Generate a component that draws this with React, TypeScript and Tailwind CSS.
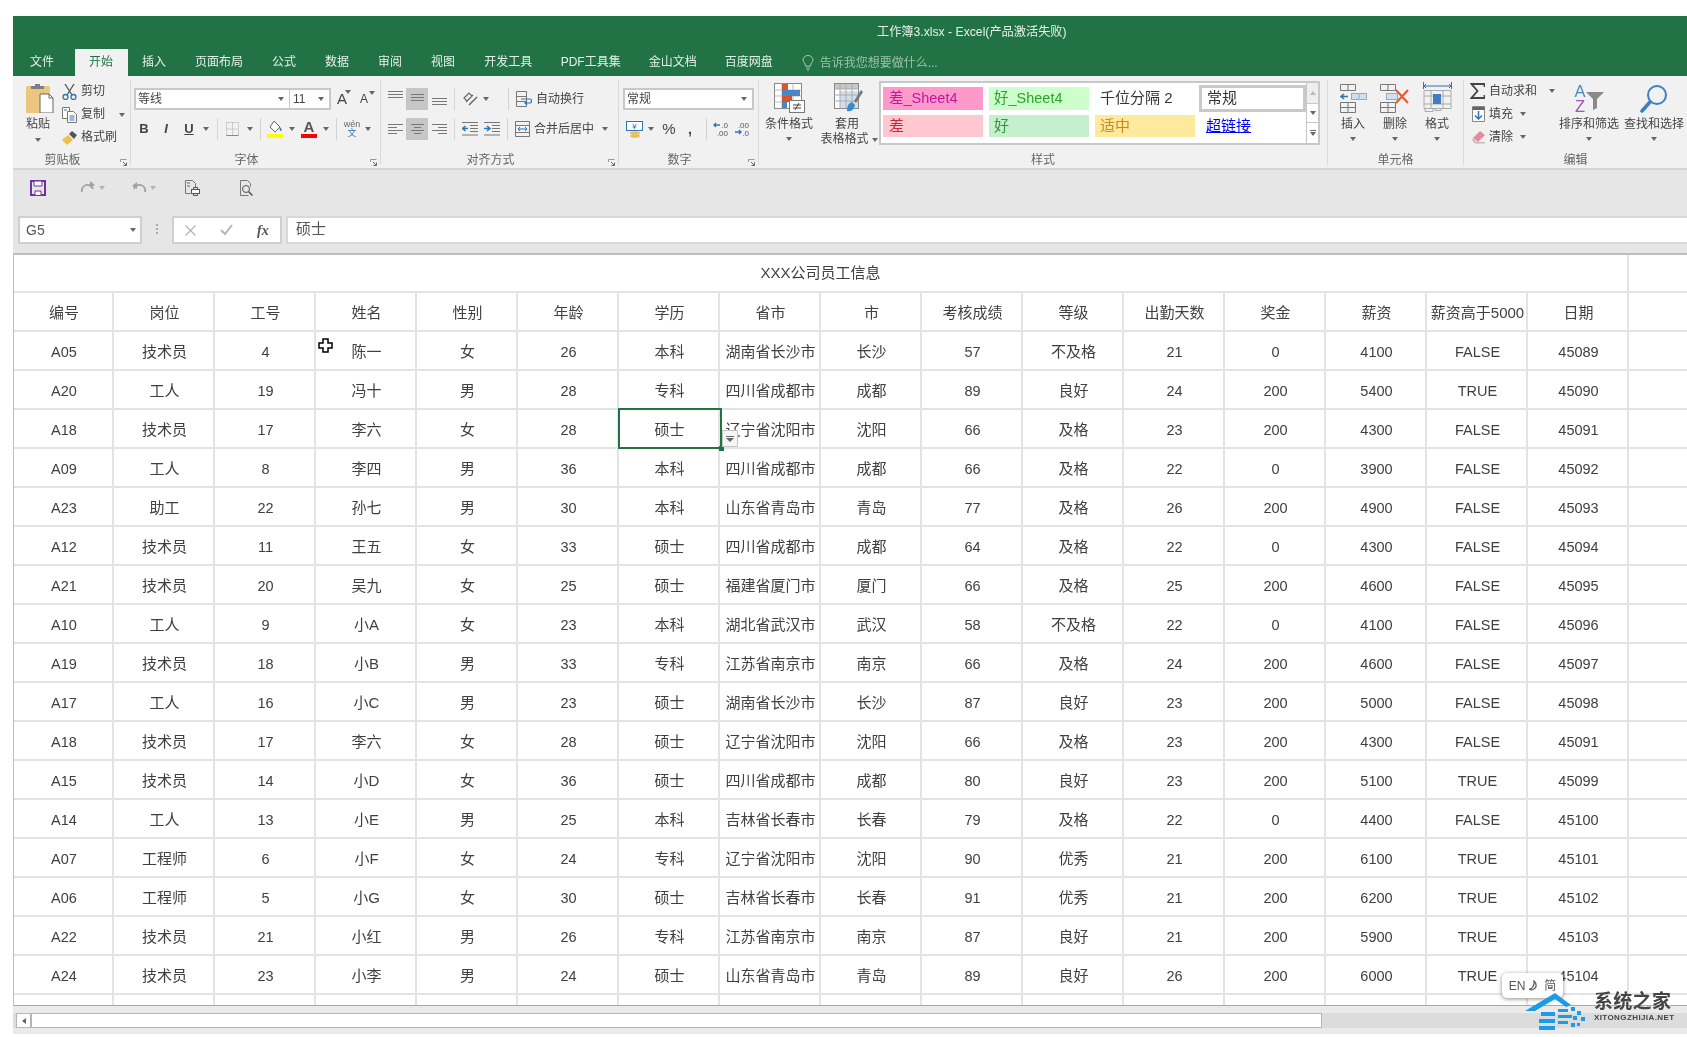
import type { ReactNode } from "react";

const columns = ["编号", "岗位", "工号", "姓名", "性别", "年龄", "学历", "省市", "市", "考核成绩", "等级", "出勤天数", "奖金", "薪资", "薪资高于5000", "日期"];

const rows = [
  "A05 技术员 4 陈一 女 26 本科 湖南省长沙市 长沙 57 不及格 21 0 4100 FALSE 45089",
  "A20 工人 19 冯十 男 28 专科 四川省成都市 成都 89 良好 24 200 5400 TRUE 45090",
  "A18 技术员 17 李六 女 28 硕士 辽宁省沈阳市 沈阳 66 及格 23 200 4300 FALSE 45091",
  "A09 工人 8 李四 男 36 本科 四川省成都市 成都 66 及格 22 0 3900 FALSE 45092",
  "A23 助工 22 孙七 男 30 本科 山东省青岛市 青岛 77 及格 26 200 4900 FALSE 45093",
  "A12 技术员 11 王五 女 33 硕士 四川省成都市 成都 64 及格 22 0 4300 FALSE 45094",
  "A21 技术员 20 吴九 女 25 硕士 福建省厦门市 厦门 66 及格 25 200 4600 FALSE 45095",
  "A10 工人 9 小A 女 23 本科 湖北省武汉市 武汉 58 不及格 22 0 4100 FALSE 45096",
  "A19 技术员 18 小B 男 33 专科 江苏省南京市 南京 66 及格 24 200 4600 FALSE 45097",
  "A17 工人 16 小C 男 23 硕士 湖南省长沙市 长沙 87 良好 23 200 5000 FALSE 45098",
  "A18 技术员 17 李六 女 28 硕士 辽宁省沈阳市 沈阳 66 及格 23 200 4300 FALSE 45091",
  "A15 技术员 14 小D 女 36 硕士 四川省成都市 成都 80 良好 23 200 5100 TRUE 45099",
  "A14 工人 13 小E 男 25 本科 吉林省长春市 长春 79 及格 22 0 4400 FALSE 45100",
  "A07 工程师 6 小F 女 24 专科 辽宁省沈阳市 沈阳 90 优秀 21 200 6100 TRUE 45101",
  "A06 工程师 5 小G 女 30 硕士 吉林省长春市 长春 91 优秀 21 200 6200 TRUE 45102",
  "A22 技术员 21 小红 男 26 专科 江苏省南京市 南京 87 良好 21 200 5900 TRUE 45103",
  "A24 技术员 23 小李 男 24 硕士 山东省青岛市 青岛 89 良好 26 200 6000 TRUE 45104",
].map((r) => r.split(" "));

const tabs = [
  { name: "文件", cls: "pl-[14.5px] pr-[20.5px]" },
  { name: "开始", cls: "px-[14.5px]" },
  { name: "插入", cls: "px-[14.5px]" },
  { name: "页面布局", cls: "px-[14.5px]" },
  { name: "公式", cls: "px-[14.5px]" },
  { name: "数据", cls: "px-[14.5px]" },
  { name: "审阅", cls: "px-[14.5px]" },
  { name: "视图", cls: "px-[14.5px]" },
  { name: "开发工具", cls: "px-[14.5px]" },
  { name: "PDF工具集", cls: "px-[14px]" },
  { name: "金山文档", cls: "px-[14px]" },
  { name: "百度网盘", cls: "px-[14px]" },
];

const gridRow = "grid h-[39px] grid-cols-[100px_repeat(15,101px)_1fr]";
const cellLine = "flex items-center justify-center border-r-2 border-b-2 border-[#e3e3e3]";

const hasCjk = (s: string) => /[\u4e00-\u9fff]/.test(s);

const Caret = ({ className = "" }: { className?: string }) => (
  <svg className={`h-[4px] w-[6px] shrink-0 ${className}`} viewBox="0 0 6 4">
    <path d="M0 0h6L3 4z" fill="#666" />
  </svg>
);

const Sep = ({ className = "" }: { className?: string }) => (
  <div className={`h-[22px] w-px shrink-0 bg-[#d2d2d2] ${className}`} />
);

const Launcher = () => (
  <svg className="absolute right-[3px] top-[7px] h-[7px] w-[7px]" viewBox="0 0 7 7" fill="none">
    <path d="M.5 3V.5H6.5M.5.5" stroke="#999" />
    <path d="M3 3l3 3M6.5 3.5v3h-3" stroke="#666" />
  </svg>
);

const Group = ({ w, label, launcher, children }: { w: string; label: string; launcher?: boolean; children: ReactNode }) => (
  <div className={`flex h-full shrink-0 flex-col ${w}`}>
    <div className="flex h-[76px] min-h-0">{children}</div>
    <div className={`relative flex h-[16px] items-center justify-center text-[12px] text-[#666] ${launcher ? "pr-[18px]" : ""}`}>
      {label}
      {launcher && <Launcher />}
    </div>
  </div>
);

const Divider = () => <div className="mt-[4px] h-[85px] w-px shrink-0 bg-[#dadada]" />;

const LargeButton = ({ w, icon, line2, children }: { w: string; icon: ReactNode; line2?: string; children: string }) => (
  <div className={`flex shrink-0 flex-col items-center pt-[7px] text-[12px] leading-[15px] text-[#444] ${w}`}>
    <div className="flex h-[30px] items-center justify-center">{icon}</div>
    <span className={`mt-[4px] whitespace-nowrap ${line2 ? "pr-[4px]" : ""}`}>{children}</span>
    {line2 ? (
      <span className="flex items-center gap-[3px] whitespace-nowrap">
        {line2}
        <Caret />
      </span>
    ) : (
      <Caret className="mt-[5px]" />
    )}
  </div>
);

const Lines = ({ x, className = "" }: { x: [number, number][]; className?: string }) => (
  <svg className={`h-[12px] w-[15px] shrink-0 ${className}`} viewBox="0 0 15 12" stroke="#777">
    {x.map(([a, b], i) => (
      <path key={i} d={`M${a} ${1.5 + i * 3}H${b}`} />
    ))}
  </svg>
);

const Paste = () => (
  <svg className="h-[30px] w-[28px]" viewBox="0 0 28 30">
    <rect x="0" y="3" width="24" height="27" rx="1.5" fill="#ecc57f" />
    <path d="M5 6V3h4V1h5v2h4v3z" fill="#7f7f7f" />
    <path d="M14 11h9l4 4v15H14z" fill="#fff" stroke="#666" />
    <path d="M23 11v4h4" fill="none" stroke="#666" />
  </svg>
);

const Scissors = () => (
  <svg className="h-[16px] w-[15px] shrink-0" viewBox="0 0 15 16" fill="none">
    <path d="M3 0l7 11M12 0L5 11" stroke="#555" strokeWidth="1.3" />
    <circle cx="3.5" cy="13" r="2.5" stroke="#2e75b6" strokeWidth="1.3" />
    <circle cx="11.5" cy="13" r="2.5" stroke="#2e75b6" strokeWidth="1.3" />
  </svg>
);

const CopyIcon = () => (
  <svg className="h-[16px] w-[15px] shrink-0" viewBox="0 0 15 16" fill="#fff" stroke="#777">
    <path d="M.5.5h7v11h-7z" />
    <path d="M5.5 4.5h6l3 3v8h-9z" />
    <path d="M2 3h3M7.5 9h5M7.5 11h5M7.5 13h5" stroke="#2e75b6" />
  </svg>
);

const Brush = () => (
  <svg className="h-[16px] w-[16px] shrink-0" viewBox="0 0 16 16">
    <path d="M0 10l6-5 5 5-6 5z" fill="#ecc050" />
    <path d="M7 4l3-3 5 4-3 4z" fill="#555" />
  </svg>
);

const BorderIcon = () => (
  <svg className="h-[14px] w-[13px] shrink-0" viewBox="0 0 13 14" fill="none">
    <path d="M.5.5h12v13H.5z" stroke="#aaa" strokeDasharray="1 1" />
    <path d="M6.5.5v13M.5 7h12" stroke="#aaa" strokeDasharray="1 1" />
    <path d="M.5 13.5h12" stroke="#888" />
  </svg>
);

const FillIcon = () => (
  <svg className="h-[18px] w-[16px] shrink-0" viewBox="0 0 16 18">
    <path d="M7 1l6 6-5 5-5-5z" fill="#fff" stroke="#666" />
    <path d="M13 7c2 2 2 4 1 4s-2-2-1-4z" fill="#2e75b6" />
    <rect x="0" y="14" width="16" height="4" fill="#ffff00" />
  </svg>
);

const ColorIcon = () => (
  <div className="flex w-[16px] shrink-0 flex-col items-center text-[15px] font-bold leading-[14px] text-[#555]">
    A
    <div className="h-[4px] w-[16px] bg-[#ff0000]" />
  </div>
);

const Orientation = () => (
  <svg className="h-[16px] w-[16px] shrink-0" viewBox="0 0 16 16" fill="none" stroke="#666">
    <path d="M2 7l5-5 3 3-5 5zM4 11l7-7" strokeWidth="1.2" />
    <path d="M7 14L15 6" strokeWidth="1.4" />
  </svg>
);

const Indent = ({ flip }: { flip?: boolean }) => (
  <svg className="h-[14px] w-[16px] shrink-0" viewBox="0 0 16 14" fill="none">
    <path d="M0 .5h16M8 3.500h8M8 6.500h8M8 9.500h8M0 13h16" stroke="#777" />
    <path d={flip ? "M0 6.500h5M3 4l3 2.500L3 9" : "M6 6.500H1M3.500 4L.5 6.500 3.500 9"} stroke="#2e75b6" strokeWidth="1.5" />
  </svg>
);

const WrapIcon = () => (
  <svg className="h-[16px] w-[16px] shrink-0" viewBox="0 0 16 16" fill="none">
    <path d="M.5.5h10v15H.5zM.5 5.500h10M.5 10.500h10" stroke="#777" />
    <path d="M5 8h9c2 0 2 4 0 4H9M11 10l-2 2 2 2" stroke="#2e75b6" strokeWidth="1.2" />
  </svg>
);

const MergeIcon = () => (
  <svg className="h-[16px] w-[15px] shrink-0" viewBox="0 0 15 16" fill="none">
    <path d="M.5.5h14v15H.5zM.5 4.500h14M.5 11.500h14" stroke="#777" />
    <path d="M3 8h9M5 6L3 8l2 2M10 6l2 2-2 2" stroke="#2e75b6" />
  </svg>
);

const Currency = () => (
  <svg className="h-[17px] w-[17px] shrink-0" viewBox="0 0 17 17">
    <rect x=".5" y=".5" width="16" height="9" fill="#fff" stroke="#2e75b6" />
    <text x="8.5" y="8" fontSize="8" textAnchor="middle" fill="#2e75b6">¥</text>
    <ellipse cx="9" cy="12" rx="5" ry="1.8" fill="#ecc050" />
    <ellipse cx="9" cy="15" rx="5" ry="1.8" fill="#ecc050" />
  </svg>
);

const Decimal = ({ inc }: { inc?: boolean }) => (
  <svg className="h-[16px] w-[15px] shrink-0" viewBox="0 0 15 16">
    <text x="15" y="7" fontSize="8" textAnchor="end" fill="#555">{inc ? ".0" : ".00"}</text>
    <text x="15" y="15" fontSize="8" textAnchor="end" fill="#555">{inc ? ".00" : ".0"}</text>
    <path d={inc ? "M7 4H1M3 2L1 4l2 2" : "M1 11h6M5 9l2 2-2 2"} stroke="#2e75b6" strokeWidth="1.3" fill="none" />
  </svg>
);

const CondFormat = () => (
  <svg className="h-[30px] w-[31px]" viewBox="0 0 31 30">
    <rect x=".5" y=".5" width="27" height="25" fill="#fff" stroke="#888" />
    <path d="M8 .5v25M19 .5v25M.5 7h27M.5 13h27M.5 19h27" stroke="#bbb" />
    <rect x="8" y="1" width="6" height="6" fill="#d9532b" />
    <rect x="8" y="7" width="18" height="6" fill="#4a86c5" />
    <rect x="8" y="13" width="10" height="6" fill="#d9532b" />
    <rect x="8" y="19" width="5" height="6" fill="#4a86c5" />
    <rect x="15.5" y="17.5" width="15" height="12" fill="#fff" stroke="#777" />
    <path d="M19 22h8M19 25h8M25 20l-4 7" stroke="#444" fill="none" />
  </svg>
);

const TableFormat = () => (
  <svg className="h-[30px] w-[30px]" viewBox="0 0 30 30">
    <rect x=".5" y=".5" width="24" height="25" fill="#fff" stroke="#888" />
    <rect x="1" y="1" width="23" height="5" fill="#c8c8c8" />
    <rect x="6" y="8" width="18" height="17" fill="#cfdff0" />
    <path d="M6 .5v25M12 .5v25M18 .5v25M.5 6h24M.5 12h24M.5 18h24" stroke="#aaa" />
    <path d="M20 18l7-11 2 2-7 11z" fill="#777" />
    <path d="M13 28c5 1 7-2 8-6l-3-3c-3 1-5 3-5 9z" fill="#3a8ad0" />
  </svg>
);

const InsertIcon = () => (
  <svg className="h-[29px] w-[27px]" viewBox="0 0 27 29" fill="none">
    <path d="M.5.5h15v6H.5zM8 .5v6M.5 18.500h15v10H.5zM8 18.500v10M.5 23.500h15" stroke="#777" />
    <rect x="11.5" y="9.5" width="15" height="6" fill="#cfdff0" stroke="#9ab" />
    <path d="M19 9.500v6" stroke="#9ab" />
    <path d="M8 12.500H1M4 10l-3 2.500L4 15" stroke="#2e75b6" strokeWidth="1.5" />
  </svg>
);

const DeleteIcon = () => (
  <svg className="h-[29px] w-[30px]" viewBox="0 0 30 29" fill="none">
    <path d="M.5.5h15v6H.5zM8 .5v6M.5 18.500h15v10H.5zM8 18.500v10M.5 23.500h15" stroke="#777" />
    <rect x="6.5" y="9.5" width="11" height="6" fill="#cfdff0" stroke="#9ab" />
    <path d="M16 6l12 13M28 6L16 19" stroke="#e8562a" strokeWidth="2" />
  </svg>
);

const FormatIcon = () => (
  <svg className="h-[32px] w-[29px]" viewBox="0 0 29 32" fill="none">
    <path d="M1 4h27M3 2L1 4l2 2M26 2l2 2-2 2M.5 0v7M28.500 0v7" stroke="#2e75b6" />
    <path d="M1 8.500h27v18H1zM8 8.500v18M20 8.500v18M1 14h27M1 22h27M2 26.500v3h8v-3M12 26.500v2h6v-2" stroke="#aaa" />
    <rect x="10" y="12" width="8" height="10" fill="#3f7fc0" />
  </svg>
);

const SumIcon = () => (
  <svg className="h-[16px] w-[15px] shrink-0" viewBox="0 0 15 16" fill="none">
    <path d="M14.500 4V1H1.500l6 7-6 7h13v-3" stroke="#444" strokeWidth="1.8" />
  </svg>
);

const FillDown = () => (
  <svg className="h-[16px] w-[13px] shrink-0" viewBox="0 0 13 16" fill="none">
    <path d="M.5.5h12v15H.5z" stroke="#888" fill="#fff" />
    <path d="M.5 2.500h12" stroke="#666" strokeWidth="3" />
    <path d="M6.500 5v8M3 9.500l3.500 3.500L10 9.500" stroke="#2e75b6" strokeWidth="1.5" />
  </svg>
);

const Eraser = () => (
  <svg className="h-[14px] w-[13px] shrink-0" viewBox="0 0 13 14">
    <path d="M1 8l7-7 5 4-7 7z" fill="#e88a9e" />
    <path d="M1 8l3 4h9v1.500H3L0 10z" fill="#bbb" />
  </svg>
);

const SortIcon = () => (
  <div className="flex h-[28px] w-[30px] items-start">
    <div className="flex w-[12px] shrink-0 flex-col items-center text-[16.5px] leading-[14px]">
      <span className="text-[#4a86c5]">A</span>
      <span className="mt-[1px] text-[#9b59b6]">Z</span>
    </div>
    <svg className="mt-[8px] h-[18px] w-[18px] shrink-0" viewBox="0 0 18 18">
      <path d="M0 0h18l-7 7v9l-4 2V7z" fill="#8a8a8a" />
    </svg>
  </div>
);

const FindIcon = () => (
  <svg className="h-[29px] w-[28px]" viewBox="0 0 28 29" fill="none">
    <circle cx="17" cy="11" r="9" stroke="#3f7fc0" strokeWidth="2" />
    <path d="M10 18l-8 9" stroke="#3f7fc0" strokeWidth="3.5" strokeLinecap="round" />
  </svg>
);

const Quick = ({ className = "", children }: { className?: string; children: ReactNode }) => (
  <svg className={`h-[16px] w-[16px] shrink-0 ${className}`} viewBox="0 0 16 16" fill="none">
    {children}
  </svg>
);

export default function App() {
  return (
    <div className="relative h-[1037px] w-[1687px] overflow-hidden bg-white pl-[13px] pt-[16px] font-['Liberation_Sans','Noto_Sans_CJK_SC',sans-serif] text-[#404040] blur-[0.4px]">
      {/* Title bar + tabs */}
      <div className="h-[60px] bg-[#217346] text-[12px] text-white">
        <div className="flex h-[33px] items-center pl-[864px] text-[12.2px] text-[#e8f0ea]">工作簿3.xlsx - Excel(产品激活失败)</div>
        <div className="flex h-[27px] items-center pl-[2.5px]">
          {tabs.map((tab) => (
            <div
              key={tab.name}
              className={`flex h-full items-center pb-px ${tab.cls} ${tab.name === "开始" ? "bg-[#f1f1f1] text-[#217346]" : "text-[#e6efe9]"}`}
            >
              {tab.name}
            </div>
          ))}
          <svg className="ml-[15px] h-[16px] w-[12px]" viewBox="0 0 12 16" fill="none" stroke="#a9c9b5">
            <path d="M3.500 11c0-3-2.500-3.500-2.500-6a5 4.500 0 0110 0c0 2.500-2.500 3-2.500 6zM4 13h4M5 15h2" />
          </svg>
          <span className="ml-[6px] text-[#9dc0aa]">告诉我您想要做什么...</span>
        </div>
      </div>

      {/* Ribbon */}
      <div className="flex h-[94px] border-b-2 border-[#d4d4d4] bg-[#f1f1f1] text-[12px] text-[#444]">
        <Group w="w-[117px]" label="剪贴板" launcher>
          <div className="ml-[10px] flex w-[30px] flex-col items-center pt-[7px] leading-[16px]">
            <div className="ml-[4px]"><Paste /></div>
            <span className="mt-[3px] whitespace-nowrap">粘贴</span>
            <Caret className="mt-[6px]" />
          </div>
          <div className="ml-[9px] flex flex-col pt-[4px] leading-[23px]">
            <div className="flex h-[23px] items-center gap-[4px]"><Scissors />剪切</div>
            <div className="flex h-[23px] items-center gap-[4px]"><CopyIcon />复制<Caret className="ml-[10px]" /></div>
            <div className="flex h-[23px] items-center gap-[3px]"><Brush />格式刷</div>
          </div>
        </Group>
        <Divider />
        <Group w="w-[249px]" label="字体" launcher>
          <div className="flex flex-col pt-[12px]">
            <div className="flex h-[22px] items-center">
              <div className="ml-[3px] flex h-[22px] w-[157px] items-center justify-between border-2 border-[#c8c8c8] bg-white pl-[2px] pr-[5px]">等线<Caret /></div>
              <div className="-ml-[1px] flex h-[22px] w-[41px] items-center justify-between border-2 border-l-0 border-[#c8c8c8] bg-white pl-[3px] pr-[5px]">11<Caret /></div>
              <span className="relative ml-[6px] w-[14px] text-[15px]">A<Caret className="absolute right-[0px] top-[2px]" /></span>
              <span className="relative ml-[9px] w-[13px] text-[12px]">A<Caret className="absolute -right-[2px] top-[1px]" /></span>
            </div>
            <div className="mt-[8px] flex h-[22px] items-center">
              <span className="ml-[6px] w-[14px] text-center text-[13px] font-bold">B</span>
              <span className="ml-[8px] w-[14px] text-center text-[13px] font-bold italic">I</span>
              <span className="ml-[9px] w-[14px] text-center text-[13px] font-bold underline">U</span>
              <Caret className="ml-[7px]" />
              <Sep className="ml-[8px]" />
              <div className="ml-[8px]"><BorderIcon /></div>
              <Caret className="ml-[8px]" />
              <Sep className="ml-[7px]" />
              <div className="ml-[6px]"><FillIcon /></div>
              <Caret className="ml-[6px]" />
              <div className="ml-[6px]"><ColorIcon /></div>
              <Caret className="ml-[6px]" />
              <Sep className="ml-[7px]" />
              <div className="ml-[7px] flex w-[16px] shrink-0 flex-col items-center text-[9px] leading-[9px]">
                <span className="text-[#666]">wén</span>
                <span className="text-[#2e75b6]">文</span>
              </div>
              <Caret className="ml-[5px]" />
            </div>
          </div>
        </Group>
        <Divider />
        <Group w="w-[237px]" label="对齐方式" launcher>
          <div className="flex flex-col pt-[12px]">
            <div className="flex h-[22px] items-center">
              <Lines className="ml-[7px] -mt-[6px]" x={[[0, 15], [0, 15], [0, 15]]} />
              <div className="ml-[3px] flex h-[22px] w-[22px] items-center justify-center bg-[#c6c6c6]"><Lines x={[[1, 14], [1, 14], [1, 14]]} /></div>
              <Lines className="ml-[4px] mt-[8px]" x={[[0, 15], [0, 15], [0, 15]]} />
              <Sep className="ml-[7px]" />
              <div className="ml-[7px]"><Orientation /></div>
              <Caret className="ml-[5px]" />
              <Sep className="ml-[19px]" />
              <div className="ml-[7px]"><WrapIcon /></div>
              <span className="ml-[4px] whitespace-nowrap">自动换行</span>
            </div>
            <div className="mt-[8px] flex h-[22px] items-center">
              <Lines className="ml-[7px]" x={[[0, 15], [0, 9], [0, 15], [0, 9]]} />
              <div className="ml-[3px] flex h-[22px] w-[22px] items-center justify-center bg-[#c6c6c6]"><Lines x={[[1, 14], [4, 11], [1, 14], [4, 11]]} /></div>
              <Lines className="ml-[4px]" x={[[0, 15], [6, 15], [0, 15], [6, 15]]} />
              <Sep className="ml-[7px]" />
              <div className="ml-[7px]"><Indent /></div>
              <div className="ml-[6px]"><Indent flip /></div>
              <Sep className="ml-[7px]" />
              <div className="ml-[7px]"><MergeIcon /></div>
              <span className="ml-[4px] whitespace-nowrap">合并后居中</span>
              <Caret className="ml-[8px]" />
            </div>
          </div>
        </Group>
        <Divider />
        <Group w="w-[139px]" label="数字" launcher>
          <div className="flex flex-col pt-[12px]">
            <div className="ml-[4px] flex h-[22px] w-[131px] items-center justify-between border-2 border-[#c8c8c8] bg-white pl-[2px] pr-[5px]">常规<Caret /></div>
            <div className="mt-[8px] flex h-[22px] items-center">
              <div className="ml-[7px]"><Currency /></div>
              <Caret className="ml-[5px]" />
              <span className="ml-[8px] w-[14px] text-center text-[15px]">%</span>
              <span className="ml-[8px] w-[12px] text-center text-[14px] font-bold">,</span>
              <Sep className="ml-[10px]" />
              <div className="ml-[6px]"><Decimal inc /></div>
              <div className="ml-[6px]"><Decimal /></div>
            </div>
          </div>
        </Group>
        <Divider />
        <Group w="w-[568px]" label="样式">
          <LargeButton w="w-[60px]" icon={<CondFormat />}>条件格式</LargeButton>
          <LargeButton w="w-[60px]" icon={<TableFormat />} line2="表格格式">套用</LargeButton>
          <div className="mt-[5px] flex h-[64px] w-[441px] shrink-0 border-2 border-[#c8c8c8] bg-white text-[15px]">
            <div className="grid h-fit grid-cols-[100px_100px_100px_105px] gap-x-[6px] gap-y-[5px] pl-[2px] pt-[4px]">
              <div className="flex h-[23px] items-center bg-[#ff99cc] pl-[6px] text-[14.5px] text-[#c0189a]">差_Sheet4</div>
              <div className="flex h-[23px] items-center bg-[#ccffcc] pl-[5px] text-[14.5px] text-[#2aa52a]">好_Sheet4</div>
              <div className="flex h-[23px] items-center pl-[5px] text-[#333]">千位分隔 2</div>
              <div className="-my-[2px] -ml-[2px] flex h-[27px] items-center border-[3px] border-[#c8c8c8] pl-[5px] text-[#333]">常规</div>
              <div className="flex h-[22px] items-center bg-[#ffc7ce] pl-[6px] text-[#d0233a]">差</div>
              <div className="flex h-[22px] items-center bg-[#c6efce] pl-[5px] text-[#2f9a3a]">好</div>
              <div className="flex h-[22px] items-center bg-[#ffe99c] pl-[5px] text-[#c48a1e]">适中</div>
              <div className="flex h-[22px] items-center pl-[5px] text-[#0000ff] underline">超链接</div>
            </div>
            <div className="ml-auto flex h-full w-[14px] flex-col border-l border-[#c8c8c8] bg-white">
              <div className="flex h-[21px] items-center justify-center border-b border-[#c8c8c8] bg-[#eee]"><Caret className="rotate-180 opacity-40" /></div>
              <div className="flex h-[19px] items-center justify-center border-b border-[#c8c8c8]"><Caret /></div>
              <div className="flex flex-1 flex-col items-center justify-center gap-[1px]"><div className="h-px w-[6px] bg-[#666]" /><Caret /></div>
            </div>
          </div>
        </Group>
        <Divider />
        <Group w="w-[135px]" label="单元格">
          <div className="ml-[4px] flex">
            <LargeButton w="w-[42px]" icon={<InsertIcon />}>插入</LargeButton>
            <LargeButton w="w-[42px]" icon={<DeleteIcon />}>删除</LargeButton>
            <LargeButton w="w-[42px]" icon={<FormatIcon />}>格式</LargeButton>
          </div>
        </Group>
        <Divider />
        <Group w="w-[223px]" label="编辑">
          <div className="ml-[6px] flex w-[89px] shrink-0 flex-col pt-[3px]">
            <div className="flex h-[23px] items-center gap-[4px]"><SumIcon />自动求和<Caret className="ml-[8px]" /></div>
            <div className="flex h-[23px] items-center gap-[4px] pl-[2px]"><FillDown />填充<Caret className="ml-[3px]" /></div>
            <div className="flex h-[23px] items-center gap-[4px] pl-[2px]"><Eraser />清除<Caret className="ml-[3px]" /></div>
          </div>
          <LargeButton w="w-[60px]" icon={<SortIcon />}>排序和筛选</LargeButton>
          <div className="ml-[5px]"><LargeButton w="w-[60px]" icon={<FindIcon />}>查找和选择</LargeButton></div>
        </Group>
      </div>

      {/* Quick access toolbar */}
      <div className="flex h-[45px] items-center bg-[#e6e6e6] pb-[10px]">
        <Quick className="ml-[17px]">
          <path d="M1 1h14v14H1z" stroke="#7030a0" strokeWidth="2" />
          <path d="M4 1h8v5H4zM5 15v-4h6v4" fill="#fff" stroke="#7030a0" />
        </Quick>
        <Quick className="ml-[34px]">
          <path d="M13 8A5.500 5.500 0 102 11" stroke="#a0a0a0" strokeWidth="1.800" transform="matrix(1 0 0 1 0 1)" />
          <path d="M10 1l5 4-5 3z" fill="#a0a0a0" />
        </Quick>
        <Caret className="ml-[3px] opacity-40" />
        <Quick className="ml-[26px]">
          <path d="M3 9a5.500 5.500 0 1111 3" stroke="#a0a0a0" strokeWidth="1.800" />
          <path d="M6 2L1 6l5 3z" fill="#a0a0a0" />
        </Quick>
        <Caret className="ml-[3px] opacity-40" />
        <Quick className="ml-[28px]">
          <path d="M1.500.5h7l3 3v4M1.500.5v13h5" stroke="#777" />
          <path d="M3 3h3M3 6h3" stroke="#2e75b6" />
          <rect x="7.500" y="9.500" width="8" height="4" stroke="#555" fill="#fff" />
          <path d="M9.500 9.500v-2h4v2M9.500 13.500v2h4v-2" stroke="#555" />
        </Quick>
        <Quick className="ml-[38px]">
          <path d="M2.500.5h7l3 3v3M2.500.5v15h8" stroke="#777" />
          <circle cx="8" cy="9" r="3.500" stroke="#555" />
          <path d="M10.500 11.500l4 4" stroke="#555" strokeWidth="1.500" />
        </Quick>
      </div>

      {/* Formula bar */}
      <div className="flex h-[38px] items-start bg-[#e6e6e6] text-[14px]">
        <div className="ml-[5px] mt-[1px] flex h-[28px] w-[124px] items-center justify-between border-2 border-[#d0d0d0] bg-white pl-[6px] pr-[4px] text-[#555]">G5<Caret /></div>
        <div className="ml-[14px] mt-[9px] flex flex-col gap-[2px]">
          <div className="h-[2px] w-[2px] bg-[#aaa]" />
          <div className="h-[2px] w-[2px] bg-[#aaa]" />
          <div className="h-[2px] w-[2px] bg-[#aaa]" />
        </div>
        <div className="ml-[14px] mt-[1px] flex h-[28px] w-[110px] items-center border-2 border-[#d0d0d0] bg-white">
          <svg className="ml-[11px] h-[11px] w-[11px]" viewBox="0 0 11 11" stroke="#b5b5b5" strokeWidth="1.300"><path d="M.5.5l10 10M10.500.5l-10 10" /></svg>
          <svg className="ml-[24px] h-[12px] w-[13px]" viewBox="0 0 13 12" fill="none" stroke="#b5b5b5" strokeWidth="2"><path d="M1 6l4 4 7-9" /></svg>
          <span className="ml-[24px] font-['Liberation_Serif',serif] text-[14px] font-bold italic text-[#555]">fx</span>
        </div>
        <div className="ml-[4px] mt-[1px] flex h-[28px] flex-1 items-center border-y-2 border-l-2 border-[#d8d8d8] bg-white pb-[2px] pl-[8px] text-[15px] text-[#555]">硕士</div>
      </div>

      {/* Sheet */}
      <div className="h-[753px] border-l border-t-2 border-b border-l-[#bdbdbd] border-t-[#bdbdbd] border-b-[#a8a8a8]">
        <div className="grid h-[38px] grid-cols-[1615px_1fr]">
          <div className={`${cellLine} text-[15px]`}>XXX公司员工信息</div>
          <div className="border-b-2 border-[#e3e3e3]" />
        </div>
        <div className={gridRow}>
          {columns.map((c) => (
            <div key={c} className={`${cellLine} pl-[2px] pt-[4px] text-[15px]`}>{c}</div>
          ))}
          <div className="border-b-2 border-[#e3e3e3]" />
        </div>
        {rows.map((row, i) => (
          <div key={i} className={gridRow}>
            {row.map((v, j) => (
              <div key={j} className={`${cellLine} pl-[2px] pt-[4px] ${hasCjk(v) ? "text-[15px]" : "text-[14.5px]"}`}>{v}</div>
            ))}
            <div className="border-b-2 border-[#e3e3e3]" />
          </div>
        ))}
        <div className="grid h-[10px] grid-cols-[100px_repeat(15,101px)_1fr]">
          {columns.map((c) => (
            <div key={c} className="border-r-2 border-[#e3e3e3]" />
          ))}
        </div>
      </div>

      {/* Horizontal scrollbar */}
      <div className="h-[28px] bg-[#eaeaea] pt-[7px]">
        <div className="flex h-[15px] bg-[#dcdcdc]">
          <div className="ml-[3px] flex h-[15px] w-[15px] items-center justify-center border border-[#b5b5b5] bg-white">
            <svg className="h-[6px] w-[4px]" viewBox="0 0 4 6"><path d="M4 0v6L0 3z" fill="#666" /></svg>
          </div>
          <div className="h-[15px] w-[1291px] border border-[#b5b5b5] bg-white" />
        </div>
      </div>

      {/* Selected cell */}
      <div className="absolute left-[618px] top-[408px] h-[41px] w-[104px] border-2 border-[#217346]" />
      <div className="absolute left-[719px] top-[446px] h-[5px] w-[5px] bg-[#217346]" />
      <div className="absolute left-[722px] top-[430px] flex h-[17px] w-[16px] items-center justify-center border border-[#c6c6c6] bg-[#f5f5f5]">
        <svg className="h-[6px] w-[8px]" viewBox="0 0 8 6"><path d="M0 0h8v1H0zM0 2h8L4 6z" fill="#666" /></svg>
      </div>

      {/* Mouse cursor */}
      <svg className="absolute left-[318px] top-[338px] h-[15px] w-[15px]" viewBox="0 0 15 15">
        <path d="M5 1h5v4h4v5h-4v4H5v-4H1V5h4z" fill="#fff" stroke="#000" strokeWidth="1.500" />
      </svg>

      {/* IME indicator */}
      <div className="absolute left-[1502px] top-[973px] flex h-[25px] w-[61px] items-center justify-center gap-[4px] rounded-[5px] bg-white text-[12px] text-[#555] shadow-[0_1px_4px_rgba(0,0,0,0.45)]">
        <span>EN</span>
        <svg className="h-[11px] w-[11px]" viewBox="0 0 11 11" fill="none" stroke="#555" strokeWidth="1.200">
          <path d="M5 1c3 3 3 7-1 8.500-1.500.5-3 0-3.500-.5 3 0 5-4 4.500-8z" />
        </svg>
        <span>简</span>
      </div>

      {/* Watermark */}
      <div className="absolute left-[1525px] top-[990px] flex items-start">
        <svg className="h-[47px] w-[65px]" viewBox="0 0 65 45">
          <path d="M0 20L30 2l16 12-5 2-11-8-20 12z" fill="#1c9be6" />
          <path d="M16 21h14v4H16zM14 28h16v4H14zM14 35h16v4H14zM33 18h10v3H33zM33 24h14v3H33zM33 30h10v3H33z" fill="#1c9be6" />
          <path d="M46 16h4v4h-4zM52 20h4v4h-4zM48 25h4v4h-4zM56 26h4v4h-4zM46 32h4v4h-4zM52 32h3v3h-3z" fill="#1c9be6" />
        </svg>
        <div className="ml-[4px] flex flex-col">
          <span className="text-[19px] font-bold leading-[23px] tracking-[0.3px] text-[#444]">系统之家</span>
          <span className="text-[8px] font-bold leading-[10px] tracking-[0.4px] text-[#444]">XITONGZHIJIA.NET</span>
        </div>
      </div>
    </div>
  );
}
